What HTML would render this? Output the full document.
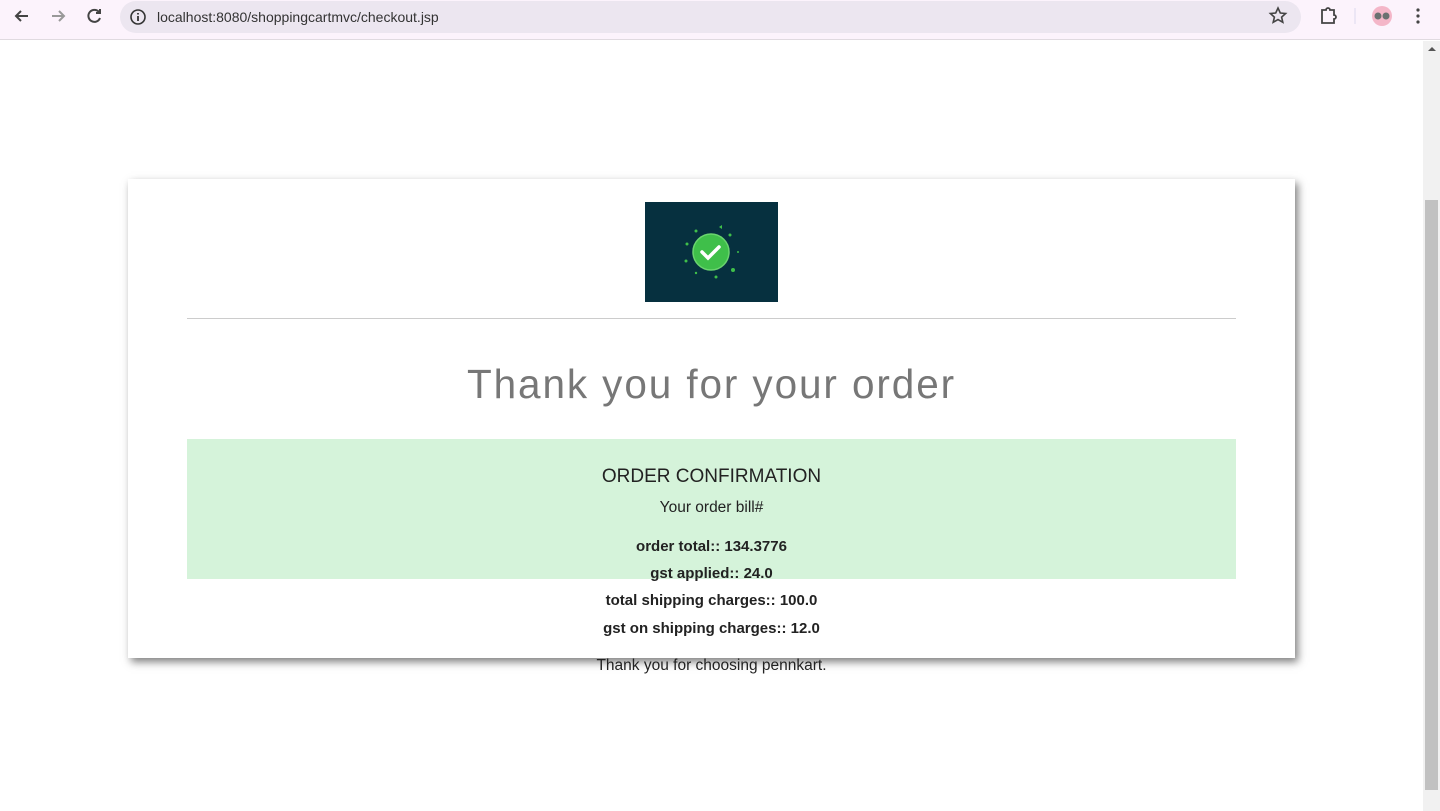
<!DOCTYPE html>
<html><head><style>
*{margin:0;padding:0;box-sizing:border-box}
body{width:1440px;height:811px;overflow:hidden;background:#fff;font-family:"Liberation Sans",sans-serif;position:relative}
.bar{position:absolute;left:0;top:0;width:1440px;height:40px;background:#fcf3fc;border-bottom:1px solid #e0dae0}
.url{position:absolute;left:120px;top:1px;width:1181px;height:32px;border-radius:16px;background:#ece6f0}
.url span{position:absolute;left:37px;top:8px;font-size:14px;color:#333}
.sb{position:absolute;left:1423px;top:41px;width:17px;height:770px;background:#f1f1f1}
.thumb{position:absolute;left:1425px;top:200px;width:13px;height:590px;background:#c1c1c1}
.card{position:absolute;left:128px;top:179px;width:1167px;height:479px;background:#fff;box-shadow:3px 4px 8px rgba(0,0,0,.5)}
.img{position:absolute;left:645px;top:202px;width:133px;height:100px;background:#06303f}
hr{position:absolute;left:187px;top:318px;width:1049px;border:0;border-top:1px solid #ccc}
.title{position:absolute;left:0;width:1423px;top:361px;text-align:center;font-size:40.5px;color:#777;letter-spacing:1.9px}
.green{position:absolute;left:187px;top:439px;width:1049px;height:140px;background:#d5f3da}
.t{position:absolute;left:0;width:1423px;text-align:center;color:#222;font-size:16px}
b{font-weight:bold;font-size:15px}
</style></head><body>
<div class="bar">
<svg width="1440" height="40" style="position:absolute;left:0;top:0">
<g stroke="#444" stroke-width="2" fill="none">
<path d="M28 16H16M21 11l-5 5 5 5"/>
<path d="M52 16h12M59 11l5 5-5 5" stroke="#999"/>
<path d="M99 12a6 6 0 1 0 1 6M100 9v4h-4"/>
</g>
</svg>
<div class="url"><svg width="20" height="20" style="position:absolute;left:8px;top:6px"><circle cx="10" cy="10" r="7" fill="none" stroke="#333" stroke-width="1.6"/><path d="M10 9v5M10 6v1.5" stroke="#333" stroke-width="1.8"/></svg><span>localhost:8080/shoppingcartmvc/checkout.jsp</span></div>
<svg width="1440" height="40" style="position:absolute;left:0;top:0">
<path d="M1278 8l2.3 5 5.3.5-4 3.6 1.2 5.2-4.8-2.8-4.8 2.8 1.2-5.2-4-3.6 5.3-.5z" fill="none" stroke="#444" stroke-width="1.6"/>
<path d="M1322 10h4a2 2 0 0 1 4 0h4v5a2 2 0 0 1 0 4v4h-12z" fill="none" stroke="#444" stroke-width="1.8"/>
<path d="M1355 8v16" stroke="#ddd8ee" stroke-width="1"/>
<circle cx="1382" cy="16" r="10" fill="#f4b6c8"/><circle cx="1378" cy="16" r="3.5" fill="#6a7070"/><circle cx="1386" cy="16" r="3.5" fill="#6a7070"/>
<circle cx="1418" cy="10" r="1.6" fill="#444"/><circle cx="1418" cy="16" r="1.6" fill="#444"/><circle cx="1418" cy="22" r="1.6" fill="#444"/>
</svg>
</div>
<div class="sb"></div><div class="thumb"></div>
<svg style="position:absolute;left:1427px;top:45px" width="10" height="8"><path d="M1 6l4-4 4 4z" fill="#555"/></svg>
<div class="card"></div>
<div class="img"><svg width="133" height="100">
<circle cx="66" cy="50" r="18" fill="#3fbf4a" stroke="#6ad46e" stroke-width="1.5"/>
<path d="M57 50l6 6 11-11" stroke="#fff" stroke-width="3.5" fill="none" stroke-linecap="round"/>
<g fill="#3fbf4a"><circle cx="51" cy="29" r="1.5"/><circle cx="85" cy="33" r="1.5"/><circle cx="42" cy="42" r="1.5"/><circle cx="93" cy="50" r="1"/><circle cx="41" cy="59" r="1.5"/><circle cx="88" cy="68" r="2"/><circle cx="51" cy="71" r="1.2"/><circle cx="71" cy="75" r="1.5"/><path d="M74 25l3-2v4z"/></g>
</svg></div>
<hr>
<div class="title">Thank you for your order</div>
<div class="green"></div>
<div class="t" style="top:466px;font-size:19px">ORDER CONFIRMATION</div>
<div class="t" style="top:499px;font-size:15.5px">Your order bill#</div>
<div class="t" style="top:538px"><b>order total:: 134.3776</b></div>
<div class="t" style="top:565px"><b>gst applied:: 24.0</b></div>
<div class="t" style="top:592px"><b>total shipping charges:: 100.0</b></div>
<div class="t" style="top:620px"><b>gst on shipping charges:: 12.0</b></div>
<div class="t" style="top:657px;font-size:15.5px">Thank you for choosing pennkart.</div>
</body></html>
